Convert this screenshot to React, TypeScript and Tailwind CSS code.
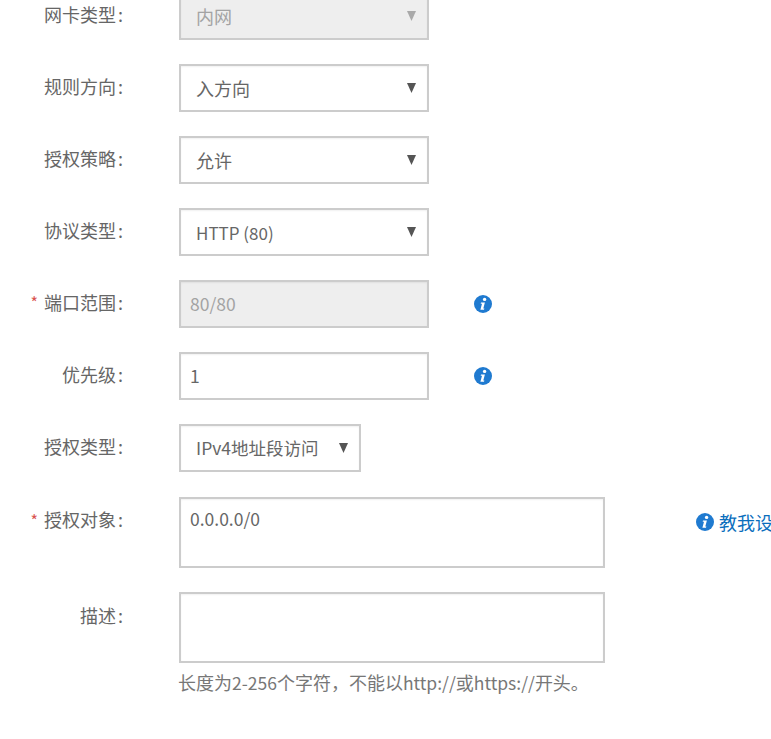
const font = { fontFamily: '"Noto Sans CJK SC", "Noto Sans", sans-serif' };

function InfoIcon({ size = 18 }: { size?: number }) {
  return (
    <svg width={size} height={size} viewBox="0 0 18 18" className="shrink-0">
      <circle cx="9" cy="9" r="9" fill="#1f7ad0" />
      <circle cx="10.6" cy="4.4" r="1.7" fill="#fff" />
      <path d="M7 7.4h3.9l-1.6 6h1.1l-.4 1.4H6.4l1.6-6H6.7z" fill="#fff" />
    </svg>
  );
}

function Arrow({ disabled }: { disabled?: boolean }) {
  return (
    <svg width="9" height="10" viewBox="0 0 9 10" className="shrink-0">
      <path d="M0 0h9L4.5 10z" fill={disabled ? '#a9a9a9' : '#555'} />
    </svg>
  );
}

// latin runs sit a touch smaller than the CJK text
function L({ children }: { children: React.ReactNode }) {
  return <span className="text-[17.5px]">{children}</span>;
}

function Row({
  label,
  required,
  tall,
  children,
  after,
}: {
  label: string;
  required?: boolean;
  tall?: boolean;
  children: React.ReactNode;
  after?: React.ReactNode;
}) {
  return (
    <div className="flex items-start">
      <div
        className={`w-[123px] shrink-0 flex items-center justify-end text-[18px] text-[#666] whitespace-nowrap ${
          tall ? 'h-[47px]' : 'h-[44px]'
        }`}
      >
        {required && <span className="text-[#d9534f] text-[16px] mr-[6px]">*</span>}
        {label}
        <span className="ml-[2px]">:</span>
      </div>
      <div className="ml-[56px] shrink-0">{children}</div>
      {after}
    </div>
  );
}

function Select({ value, disabled, narrow }: { value: React.ReactNode; disabled?: boolean; narrow?: boolean }) {
  return (
    <div
      className={`h-[48px] border-2 border-[#ccc] shadow-[inset_0_1px_2px_rgba(0,0,0,0.06)] flex items-center justify-between pl-[15px] text-[18px] ${
        narrow ? 'w-[182px] pr-[11px]' : 'w-[250px] pr-[11px]'
      } ${disabled ? 'bg-[#eee] text-[#a3a3a3]' : 'bg-white text-[#666]'}`}
    >
      <span className="whitespace-nowrap">{value}</span>
      <Arrow disabled={disabled} />
    </div>
  );
}

function TextBox({ value, disabled }: { value: string; disabled?: boolean }) {
  return (
    <div
      className={`w-[250px] h-[48px] border-2 border-[#ccc] shadow-[inset_0_1px_2px_rgba(0,0,0,0.06)] flex items-center px-[9px] text-[18px] ${
        disabled ? 'bg-[#eee] text-[#a3a3a3]' : 'bg-white text-[#666]'
      }`}
    >
      <L>{value}</L>
    </div>
  );
}

function Tip() {
  return (
    <div className="ml-[45px] h-[48px] flex items-center">
      <InfoIcon />
    </div>
  );
}

export default function App() {
  return (
    <div className="w-[771px] h-[739px] bg-white overflow-hidden" style={font}>
      <div className="-mt-[8px] flex flex-col gap-[24px]">
        <Row label="网卡类型"><Select value="内网" disabled /></Row>
        <Row label="规则方向"><Select value="入方向" /></Row>
        <Row label="授权策略"><Select value="允许" /></Row>
        <Row label="协议类型"><Select value={<span className="text-[17px]">HTTP (80)</span>} /></Row>
        <Row label="端口范围" required after={<Tip />}><TextBox value="80/80" disabled /></Row>
        <Row label="优先级" after={<Tip />}><TextBox value="1" /></Row>
        <Row label="授权类型"><Select value={<span className="text-[17.5px]">IPv4地址段访问</span>} narrow /></Row>
        <Row
          label="授权对象"
          required
          tall
          after={
            <div className="ml-[91px] h-[52px] flex items-center gap-[5px] text-[18px] text-[#0a6ebd] whitespace-nowrap">
              <InfoIcon />
              <span>教我设置</span>
            </div>
          }
        >
          <div className="mt-[1px] w-[426px] h-[71px] border-2 border-[#ccc] shadow-[inset_0_1px_2px_rgba(0,0,0,0.06)] bg-white px-[9px] pt-[10px] text-[17.5px] leading-[20px] text-[#666]">
            0.0.0.0/0
          </div>
        </Row>
        <Row label="描述" tall>
          <div className="w-[426px] h-[71px] border-2 border-[#ccc] shadow-[inset_0_1px_2px_rgba(0,0,0,0.06)] bg-white" />
          <p className="-ml-[1px] mt-[8px] text-[18px] leading-[22px] text-[#777] whitespace-nowrap">
            长度为<L>2-256</L>个字符，不能以<L>http://</L>或<L>https://</L>开头。
          </p>
        </Row>
      </div>
    </div>
  );
}
